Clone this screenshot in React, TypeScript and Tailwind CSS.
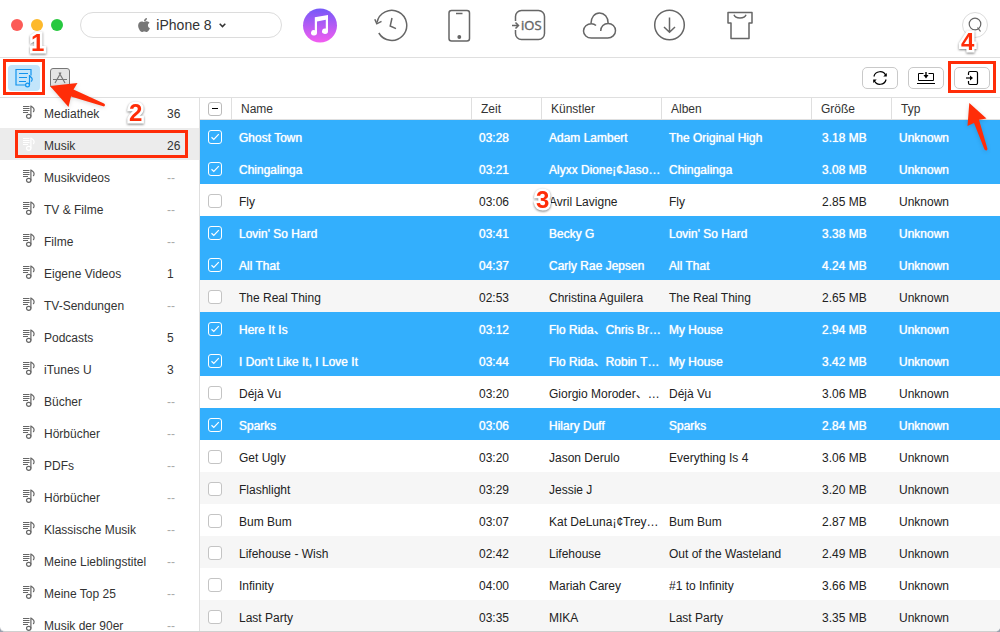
import type { ReactNode } from "react";
import { FaApple } from "react-icons/fa";

const playlists = [
  { name: "Mediathek", count: "36" },
  { name: "Musik", count: "26" },
  { name: "Musikvideos", count: "--" },
  { name: "TV & Filme", count: "--" },
  { name: "Filme", count: "--" },
  { name: "Eigene Videos", count: "1" },
  { name: "TV-Sendungen", count: "--" },
  { name: "Podcasts", count: "5" },
  { name: "iTunes U", count: "3" },
  { name: "Bücher", count: "--" },
  { name: "Hörbücher", count: "--" },
  { name: "PDFs", count: "--" },
  { name: "Hörbücher", count: "--" },
  { name: "Klassische Musik", count: "--" },
  { name: "Meine Lieblingstitel", count: "--" },
  { name: "Meine Top 25", count: "--" },
  { name: "Musik der 90er", count: "--" },
];

const songs = [
  { name: "Ghost Town", time: "03:28", artist: "Adam Lambert", album: "The Original High", size: "3.18 MB", checked: true },
  { name: "Chingalinga", time: "03:21", artist: "Alyxx Dione¡¢Jaso…", album: "Chingalinga", size: "3.08 MB", checked: true },
  { name: "Fly", time: "03:06", artist: "Avril Lavigne", album: "Fly", size: "2.85 MB", checked: false },
  { name: "Lovin' So Hard", time: "03:41", artist: "Becky G", album: "Lovin' So Hard", size: "3.38 MB", checked: true },
  { name: "All That", time: "04:37", artist: "Carly Rae Jepsen", album: "All That", size: "4.24 MB", checked: true },
  { name: "The Real Thing", time: "02:53", artist: "Christina Aguilera", album: "The Real Thing", size: "2.65 MB", checked: false },
  { name: "Here It Is", time: "03:12", artist: "Flo Rida、Chris Br…", album: "My House", size: "2.94 MB", checked: true },
  { name: "I Don't Like It, I Love It", time: "03:44", artist: "Flo Rida、Robin T…", album: "My House", size: "3.42 MB", checked: true },
  { name: "Déjà Vu", time: "03:20", artist: "Giorgio Moroder、…", album: "Déjà Vu", size: "3.06 MB", checked: false },
  { name: "Sparks", time: "03:06", artist: "Hilary Duff", album: "Sparks", size: "2.84 MB", checked: true },
  { name: "Get Ugly", time: "03:20", artist: "Jason Derulo", album: "Everything Is 4", size: "3.06 MB", checked: false },
  { name: "Flashlight", time: "03:29", artist: "Jessie J", album: "", size: "3.20 MB", checked: false },
  { name: "Bum Bum", time: "03:07", artist: "Kat DeLuna¡¢Trey…", album: "Bum Bum", size: "2.87 MB", checked: false },
  { name: "Lifehouse - Wish", time: "02:42", artist: "Lifehouse", album: "Out of the Wasteland", size: "2.49 MB", checked: false },
  { name: "Infinity", time: "04:00", artist: "Mariah Carey", album: "#1 to Infinity", size: "3.66 MB", checked: false },
  { name: "Last Party", time: "03:35", artist: "MIKA", album: "Last Party", size: "3.35 MB", checked: false },
];

const navItems: { label: string; icon: ReactNode }[] = [
  {
    label: "Medien",
    icon: (
      <svg width="36" height="36" viewBox="0 0 36 36">
        <defs>
          <linearGradient id="media" x1="0" y1="0" x2="0" y2="1">
            <stop offset="0" stopColor="#7459f8" />
            <stop offset="1" stopColor="#f35df0" />
          </linearGradient>
        </defs>
        <circle cx="18" cy="18.5" r="17" fill="url(#media)" />
        <path
          d="M12.8 10.2 26 8v16.2a3 2.7 0 1 1-2.2-2.6v-8.8L15 14.4v11.4a3 2.7 0 1 1-2.2-2.6z"
          fill="#fff"
        />
      </svg>
    ),
  },
  {
    label: "Verlauf",
    icon: (
      <svg width="36" height="36" viewBox="0 0 36 36">
        <path d="M5 15.5A15 15 0 1 1 6.8 26" />
        <path d="M2.8 12.2 4.8 16.8l4.700-2.400" />
        <path d="M20 11l-1.800 8 5.800 2.600" />
      </svg>
    ),
  },
  {
    label: "Gerät",
    icon: (
      <svg width="36" height="36" viewBox="0 0 36 36">
        <rect x="7" y="3.500" width="20.500" height="30.500" rx="2.500" />
        <path d="M14 6.500h6.500" />
        <circle cx="17.300" cy="30" r="1.200" className="fill-[#666]" />
      </svg>
    ),
  },
  {
    label: "Zu iOS",
    icon: (
      <svg width="36" height="36" viewBox="0 0 36 36">
        <path d="M3.500 14V9.500a6 6 0 0 1 6-6h17a6 6 0 0 1 6 6v17a6 6 0 0 1-6 6h-17a6 6 0 0 1-6-6V23" />
        <path d="M0 18.500h6.500M3.500 15.500l3 3-3 3" />
        <text
          x="9"
          y="23"
          fontSize="13"
          fontFamily="Open Sans, sans-serif"
          className="fill-[#666] [stroke-width:0.4]"
        >
          iOS
        </text>
      </svg>
    ),
  },
  {
    label: "iCloud",
    icon: (
      <svg width="36" height="36" viewBox="0 0 36 36">
        <path d="M14 18.500c-1.300-1.300-2.900-1.800-4.500-1.800-4.400 0-8 3.200-8 7.200s3.500 7.100 7.800 7.100h16.400c4.300 0 7.800-3.200 7.800-7.300s-3.300-7.200-7.400-7.200-7.400 3-7.400 7.500" />
        <path d="M9 16.300C9 10.200 12.700 6 17.500 6s8.700 4 8.600 10" />
      </svg>
    ),
  },
  {
    label: "Download",
    icon: (
      <svg width="36" height="36" viewBox="0 0 36 36">
        <circle cx="17.500" cy="18" r="14.800" />
        <path d="M17.500 10.500V25M12 20l5.500 5.300L23 20" />
      </svg>
    ),
  },
  {
    label: "Skin",
    icon: (
      <svg width="36" height="36" viewBox="0 0 36 36">
        <path d="M6 5.500h24V16h-3v15.500H9V16H6z" strokeLinejoin="round" />
        <path d="M12 7.800c1.300 4.200 10.700 4.200 12 0" />
      </svg>
    ),
  },
];

function NoteIcon() {
  return (
    <svg
      width="12"
      height="14"
      viewBox="0 0 12 14"
      fill="none"
      stroke="currentColor"
      strokeWidth="1.200"
      aria-hidden="true"
    >
      <path d="M0 1.500h6.500M0 3.500h6.500M0 5.500h6.500M0 7.500h5" />
      <path d="M7.900 11.500V.5c.3 1.700 3.200 1.500 3.200 4.200 0 1-.3 1.700-.9 2.300" />
      <ellipse cx="5.700" cy="11.300" rx="2.200" ry="2" />
    </svg>
  );
}

function StepNumber({ value, className }: { value: string; className: string }) {
  return (
    <span
      className={`pointer-events-none absolute z-20 text-2xl leading-6 font-bold text-[#ff2d08] [paint-order:stroke] [-webkit-text-stroke:5px_white] [filter:drop-shadow(0_1px_1px_rgba(0,0,0,0.5))] ${className}`}
    >
      {value}
    </span>
  );
}

function ToolButton({ label, children }: { label: string; children: ReactNode }) {
  return (
    <button
      type="button"
      aria-label={label}
      className="flex h-[22px] w-9 items-center justify-center rounded-[5px] border border-[#c9c9c9] bg-white text-black"
    >
      {children}
    </button>
  );
}

function TopBar() {
  return (
    <header className="flex h-[58px] shrink-0 items-center border-b border-[#dfdfdf] pr-3 pb-[7px] pl-[11px]">
      <div className="flex shrink-0 gap-2">
        <button type="button" aria-label="Schließen" className="size-3 rounded-full bg-[#fc5b57]" />
        <button type="button" aria-label="Minimieren" className="size-3 rounded-full bg-[#fdb92c]" />
        <button type="button" aria-label="Maximieren" className="size-3 rounded-full bg-[#27c83f]" />
      </div>
      <button
        type="button"
        className="ml-[17px] flex h-[26px] w-[202px] shrink-0 items-center justify-center rounded-full border border-[#dcdcdc] text-sm text-[#333]"
      >
        <FaApple className="mr-1 size-4 text-[#777]" />
        iPhone 8
        <svg width="7" height="5" viewBox="0 0 7 5" className="ml-[7px]" fill="none" stroke="#333" strokeWidth="1.500">
          <path d="M.7.8l2.800 2.800L6.300.8" />
        </svg>
      </button>
      <nav className="ml-[3px] flex">
        {navItems.map((item) => (
          <button
            key={item.label}
            type="button"
            aria-label={item.label}
            className="flex w-[70px] justify-center fill-none stroke-[#666] stroke-[1.500] [&_svg:has(defs)]:stroke-none"
          >
            {item.icon}
          </button>
        ))}
      </nav>
      <button
        type="button"
        aria-label="Suchen"
        className="ml-auto flex size-[26px] items-center justify-center rounded-full border border-[#dcdcdc]"
      >
        <svg width="14" height="16" viewBox="0 0 14 16" fill="none" stroke="#666" strokeWidth="1.200">
          <circle cx="7" cy="7" r="5.800" />
          <path d="M9.500 10.500l3 4" />
        </svg>
      </button>
    </header>
  );
}

function Toolbar() {
  return (
    <div className="flex h-10 shrink-0 items-center justify-between border-b border-[#dfdfdf] pr-[10px] pl-2">
      <div className="flex items-center gap-[10px]">
        <div className="relative">
          <button
            type="button"
            aria-label="Medien"
            className="flex h-[26px] w-8 items-center justify-center rounded bg-[#c2e5fb]"
          >
            <svg width="18" height="20" viewBox="0 0 18 20" fill="none" stroke="#1193ee" strokeWidth="1.200">
              <path d="M10.500 17H1V1.500h15v6" />
              <path d="M4 5.500h9M4 9.500h8M4 13.500h7" />
              <path d="M14.500 17V7c.2 2 3 2.200 2.700 4.500-.2 1.200-.7 1.700-1.200 2" />
              <circle cx="12.500" cy="17" r="1.900" />
            </svg>
          </button>
          <span className="pointer-events-none absolute -inset-x-[5px] -top-1.5 -bottom-1 border-[3px] border-[#ff2d08]" />
          <StepNumber value="1" className="-top-[34px] left-[23px]" />
          <svg
            className="pointer-events-none absolute top-[18px] left-[41px] z-10 max-w-none drop-shadow-sm"
            width="58"
            height="28"
            viewBox="0 0 58 28"
            fill="#ff2d08"
            aria-hidden="true"
          >
            <path d="M1 3l27.500-3L24.500 6.500l30.500 14q2 1.500 0 3L22 13.500l-2.500 10.500z" />
          </svg>
        </div>
        <button
          type="button"
          aria-label="Apps"
          className="flex size-5 items-center justify-center rounded-[3px] border border-[#777] bg-[#e4e4e4]"
        >
          <svg width="14" height="14" viewBox="0 0 14 14" fill="none" stroke="#777" strokeWidth="1.200">
            <path d="M6 1.500l6 10.500M8 1.500L2 12M0 8.500h14" />
          </svg>
        </button>
      </div>

      <div className="flex items-center gap-[10px]">
        <ToolButton label="Aktualisieren">
          <svg width="16" height="16" viewBox="0 0 16 16" fill="none" stroke="currentColor" strokeWidth="1.200">
            <path d="M1.900 6.500A6.300 6.300 0 0 1 13.800 5.500M14.100 9.500A6.300 6.300 0 0 1 2.200 10.500" />
            <path d="M14.800 3v3.500h-3.500zM1.200 13V9.500h3.500z" fill="currentColor" stroke="none" />
          </svg>
        </ToolButton>
        <ToolButton label="Auf Computer übertragen">
          <svg width="18" height="14" viewBox="0 0 18 14" fill="none" stroke="currentColor">
            <path d="M6.500 2.500h-5v7h15v-7h-5M0 12.500h18" />
            <path d="M9 1v4" strokeWidth="1.400" />
            <path d="M6.500 4h5L9 7.500z" fill="currentColor" stroke="none" />
          </svg>
        </ToolButton>
        <div className="relative">
          <ToolButton label="Auf Gerät übertragen">
            <svg width="14" height="16" viewBox="0 0 14 16" fill="none" stroke="currentColor" strokeWidth="1.200">
              <path d="M3.500 5V3A1.500 1.500 0 0 1 5 1.500h6A1.500 1.500 0 0 1 12.500 3v10a1.500 1.500 0 0 1-1.500 1.500H5A1.500 1.500 0 0 1 3.500 13v-2" />
              <path d="M1 8h5" />
              <path d="M5 5.500v5L8 8z" fill="currentColor" stroke="none" />
            </svg>
          </ToolButton>
          <span className="pointer-events-none absolute -inset-x-[6px] -top-1.5 -bottom-1 border-[3px] border-[#ff2d08]" />
          <StepNumber value="4" className="-top-[37px] left-[7px]" />
          <svg
            className="pointer-events-none absolute top-9 left-3 z-10 max-w-none drop-shadow-sm"
            width="24"
            height="50"
            viewBox="0 0 24 50"
            fill="#ff2d08"
            aria-hidden="true"
          >
            <path d="M3.300 0L20.500 15.500l-7.500 1.200L21.500 46q-.5 2.500-3 .5L8 20l-6.500 3z" />
          </svg>
        </div>
      </div>
    </div>
  );
}

function Sidebar() {
  return (
    <aside className="w-[200px] shrink-0 overflow-hidden border-r border-[#dfdfdf] text-xs text-[#333]">
      <ul className="-mt-0.5">
        {playlists.map((item, index) => {
          const active = item.name === "Musik";
          return (
            <li key={index} className={`relative ${active ? "bg-[#ececec]" : ""}`}>
              <a href="#" className="flex h-8 items-center pr-[18px] pl-[23px]">
                <span className={active ? "text-white" : "text-[#666]"}>
                  <NoteIcon />
                </span>
                <span className="ml-[9px] pt-[3px] whitespace-nowrap">{item.name}</span>
                <span
                  className={`ml-auto w-[14px] pt-[3px] ${item.count === "--" ? "text-[#aaa]" : ""}`}
                >
                  {item.count}
                </span>
              </a>
              {active && (
                <>
                  <span className="pointer-events-none absolute inset-y-0.5 right-[11px] left-[15px] border-[3px] border-[#ff2d08]" />
                  <StepNumber value="2" className="-top-[27px] left-[129px]" />
                </>
              )}
            </li>
          );
        })}
      </ul>
    </aside>
  );
}

function SongTable() {
  return (
    <div className="min-w-0 flex-1 overflow-hidden">
      <table className="w-full table-fixed border-separate border-spacing-0 text-left text-xs text-[#222]">
        <colgroup>
          <col className="w-8" />
          <col />
          <col className="w-[70px]" />
          <col className="w-[120px]" />
          <col className="w-[150px]" />
          <col className="w-20" />
          <col className="w-[108px]" />
        </colgroup>
        <thead>
          <tr className="h-[22px] text-[#333] [&>th]:border-b [&>th]:border-[#dfdfdf] [&>th]:p-0 [&>th]:font-normal [&>th:not(:last-child)]:border-r [&>th:not(:first-child)]:pl-[9px]">
            <th>
              <button
                type="button"
                aria-label="Auswahl aufheben"
                className="ml-2 flex size-[14px] items-center justify-center rounded-[3px] border border-[#bbb]"
              >
                <span className="h-px w-1.5 bg-black" />
              </button>
            </th>
            <th>Name</th>
            <th>Zeit</th>
            <th>Künstler</th>
            <th>Alben</th>
            <th>Größe</th>
            <th>Typ</th>
          </tr>
        </thead>
        <tbody>
          {songs.map((song) => (
            <tr
              key={song.name}
              className={`h-8 [&>td]:p-0 [&>td:first-child]:pt-0.5 [&>td:not(:first-child)]:pt-1 [&>td:not(:first-child)]:pl-[7px] ${
                song.checked
                  ? "bg-[#33affd] text-white [text-shadow:0_0_1px_white]"
                  : "odd:bg-white even:bg-[#f6f6f6]"
              }`}
            >
              <td>
                <label className="ml-2 grid size-[14px]">
                  <input
                    type="checkbox"
                    aria-label={song.name}
                    defaultChecked={song.checked}
                    className="peer col-start-1 row-start-1 size-[14px] appearance-none rounded-[3px] border border-[#c4c4c4] bg-white checked:border-white checked:bg-transparent"
                  />
                  <svg
                    viewBox="0 0 14 14"
                    className="pointer-events-none invisible col-start-1 row-start-1 size-[14px] peer-checked:visible"
                    fill="none"
                    stroke="white"
                    strokeWidth="1.200"
                  >
                    <path d="M3.500 7.300l2.300 2.200 5-5.300" />
                  </svg>
                </label>
              </td>
              <td>{song.name}</td>
              <td>{song.time}</td>
              <td className="relative">
                <span className="block leading-4 whitespace-nowrap">{song.artist}</span>
                {song.name === "Fly" && <StepNumber value="3" className="top-1 -left-1.5" />}
              </td>
              <td>{song.album}</td>
              <td>
                <span className="pl-[3px]">{song.size}</span>
              </td>
              <td>Unknown</td>
            </tr>
          ))}
        </tbody>
      </table>
    </div>
  );
}

function App() {
  return (
    <div className="h-screen bg-gray-400 font-['Liberation_Sans','Noto_Sans_CJK_JP',sans-serif]">
      <div className="flex h-full flex-col overflow-hidden rounded-b-[5px] border-b border-[#d0d0d0] bg-white">
        <TopBar />
        <Toolbar />
        <main className="flex min-h-0 flex-1">
          <Sidebar />
          <SongTable />
        </main>
      </div>
    </div>
  );
}

export default App;
